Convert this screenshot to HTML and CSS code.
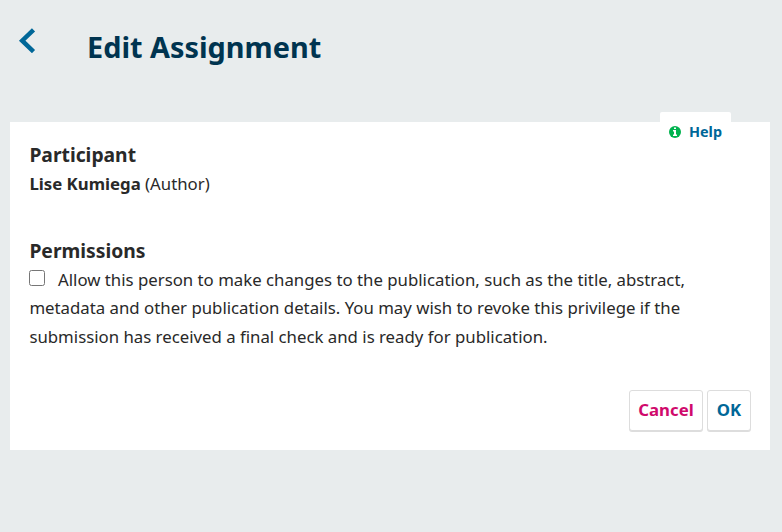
FILE: index.html
```html
<!DOCTYPE html>
<html lang="en">
<head>
<meta charset="utf-8">
<title>Edit Assignment</title>
<link rel="stylesheet" href="styles.css">
</head>
<body>
<header class="header">
  <a class="back" href="#" aria-label="Back"><svg viewBox="0 0 18 26" width="18" height="26"><path d="M15.500 2.800 4.200 13.700l11.300 10.900" fill="none" stroke="#006798" stroke-width="4.500"/></svg></a>
  <h1 class="title">Edit Assignment</h1>
</header>
<main class="panel">
  <a class="help" href="#"><svg viewBox="0 0 12 12" width="12" height="12"><circle cx="6" cy="6" r="6" fill="#00b24e"/><path d="M5 1.500h2V3H5zM4 4h3v4.500h1V10H4V8.500h1v-3H4z" fill="#fff"/></svg>Help</a>
  <section class="section">
    <h2 class="heading">Participant</h2>
    <p class="text"><strong>Lise Kumiega</strong> (Author)</p>
  </section>
  <section class="section">
    <h2 class="heading">Permissions</h2>
    <label class="text"><input class="check" type="checkbox">Allow this person to make changes to the publication, such as the title, abstract, metadata and other publication details. You may wish to revoke this privilege if the submission has received a final check and is ready for publication.</label>
  </section>
  <footer class="actions">
    <button class="button cancel">Cancel</button>
    <button class="button">OK</button>
  </footer>
</main>
</body>
</html>
```
FILE: styles.css
```css
* { box-sizing: border-box; }
body { margin: 0; height: 532px; background: #e8eced; color: #292929; font-family: "Noto Sans", sans-serif; overflow: hidden; }
.header { display: flex; height: 122px; padding: 27px 0 0 18px; }
.back { display: block; width: 69px; height: 28px; }
.back svg { display: block; }
.title { margin: 0; font-size: 28.85px; line-height: 40px; color: #003450; }
.panel { position: relative; width: 760px; height: 328px; margin-left: 10px; padding: 19px 19px 0 19.400px; background: #fff; }
.help { position: absolute; top: -10px; right: 39px; width: 71px; height: 39px; padding: 0 0 0 9px; display: flex; align-items: center; gap: 8px; background: #fff; border-radius: 2px; color: #006798; font-size: 14.4px; font-weight: 700; text-decoration: none; }
.section { height: 96px; }
.heading { margin: 0; font-size: 19.3px; line-height: 28px; }
.text { display: block; margin: 0; padding-top: 0.5px; width: 680px; font-size: 16.8px; line-height: 28.56px; }
.check { width: 16px; height: 16px; margin: 0 13px 0 -0.400px; vertical-align: 0; }
.actions { display: flex; justify-content: flex-end; gap: 4px; margin-top: 57px; }
.button { width: 44px; height: 41px; padding: 0 0 2px; border: 1px solid #ddd; border-radius: 3px; background: #fff; box-shadow: 0 1px 0 #ddd; color: #006798; font: 700 16.8px/24px "Noto Sans", sans-serif; }
.cancel { width: 74px; color: #d00a6c; }
```
